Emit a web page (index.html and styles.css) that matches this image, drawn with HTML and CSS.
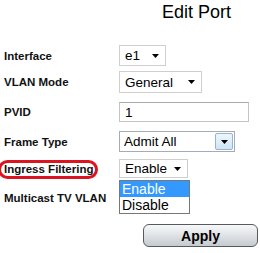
FILE: index.html
```html
<!DOCTYPE html>
<html lang="en">
<head>
  <meta charset="UTF-8" />
  <title>Edit Port</title>
  <link rel="stylesheet" href="styles.css">
</head>
<body>

<h1 class="title">Edit Port</h1>

<form class="port-form">
  <div class="row row-interface">
    <label class="label">Interface</label>
    <div class="select select-short">
      <span>e1</span>
      <svg class="arrow" width="7" height="4" viewBox="0 0 7 4"><path d="M0 0H7L3.5 4Z" fill="#000"/></svg>
    </div>
  </div>

  <div class="row row-mode">
    <label class="label">VLAN Mode</label>
    <div class="select select-mode">
      <span>General</span>
      <svg class="arrow" width="7" height="4" viewBox="0 0 7 4"><path d="M0 0H7L3.5 4Z" fill="#000"/></svg>
    </div>
  </div>

  <div class="row row-pvid">
    <label class="label">PVID</label>
    <div class="textbox">1</div>
  </div>

  <div class="row row-frame">
    <label class="label">Frame Type</label>
    <div class="combo">
      <span>Admit All</span>
      <div class="combo-btn">
        <svg width="7" height="4" viewBox="0 0 7 4"><path d="M0 0H7L3.5 4Z" fill="#000"/></svg>
      </div>
    </div>
  </div>

  <div class="row row-ingress">
    <label class="label">Ingress Filtering<span class="mark"></span></label>
    <div class="select select-enable">
      <span>Enable</span>
      <svg class="arrow" width="7" height="4" viewBox="0 0 7 4"><path d="M0 0H7L3.5 4Z" fill="#000"/></svg>
      <ul class="options">
        <li class="selected">Enable</li>
        <li>Disable</li>
      </ul>
    </div>
  </div>

  <div class="row row-multicast">
    <label class="label">Multicast TV VLAN</label>
  </div>

  <div class="actions">
    <button type="button" class="apply">Apply</button>
  </div>
</form>

</body>
</html>
```

FILE: styles.css
```css
body {
  margin: 0;
  background-color: #fff;
  color: #000;
  font-family: "Liberation Sans", Arial, sans-serif;
}
.title {
  margin: 0;
  padding: 2px 0 0 162px;
  font-size: 18px;
  font-weight: normal;
  line-height: 21px;
}
.port-form {
  margin-top: 22px;
}
.row {
  display: flex;
  align-items: center;
}
.row-interface { height: 21px; margin-bottom: 5px; }
.row-mode { height: 22px; margin-bottom: 9px; }
.row-pvid { height: 20px; margin-bottom: 9px; }
.row-frame { height: 21px; margin-bottom: 7px; }
.row-ingress { height: 19px; margin-bottom: 9px; }
.row-multicast { height: 21px; }
.label {
  position: relative;
  width: 115px;
  padding-left: 4px;
  font-size: 11.5px;
  font-weight: bold;
  color: #111;
}
.select {
  position: relative;
  box-sizing: border-box;
  height: 100%;
  display: flex;
  align-items: center;
  justify-content: space-between;
  padding: 0 6px 0 5px;
  border: 1px solid #cfcfcf;
  background-color: #fff;
  font-size: 13.5px;
}
.select-short { width: 47px; }
.select-mode { width: 83px; }
.select-enable { width: 69px; }
.textbox {
  box-sizing: border-box;
  width: 130px;
  height: 100%;
  padding: 2px 5px;
  border: 1px solid #c4c4c4;
  border-top-color: #a9a9a9;
  font-size: 13.5px;
}
.combo {
  box-sizing: border-box;
  width: 116px;
  height: 100%;
  display: flex;
  align-items: stretch;
  border: 1px solid #a4acb6;
  font-size: 13.5px;
}
.combo span {
  flex-grow: 1;
  padding-left: 4px;
  line-height: 19px;
}
.combo-btn {
  width: 16px;
  display: flex;
  align-items: center;
  justify-content: center;
  margin: 1px;
  border: 1px solid #98b4cc;
  border-radius: 2px;
  background: linear-gradient(#eef6fc, #cfe4f4);
}
.mark {
  position: absolute;
  left: -2px;
  top: -3px;
  width: 94px;
  height: 13px;
  border: 3px solid #dc1420;
  border-radius: 10px;
}
.options {
  position: absolute;
  left: -1px;
  top: 20px;
  width: 69px;
  margin: 0;
  padding: 0;
  list-style: none;
  border: 1px solid #777;
  background-color: #fff;
  font-size: 14px;
}
.options li {
  height: 16px;
  line-height: 16px;
  padding-left: 2px;
}
.options .selected {
  background-color: #3399ff;
  color: #fff;
}
.actions {
  display: flex;
  justify-content: flex-end;
  padding: 16px 2px 0 0;
}
.apply {
  width: 115px;
  height: 23px;
  border: 1px solid #555b61;
  border-radius: 6px;
  background: linear-gradient(#f7f8f9, #dfe2e5 50%, #c5cacf);
  font-family: "Liberation Sans", Arial, sans-serif;
  font-size: 14px;
  font-weight: bold;
  color: #000;
  padding: 0;
}
```
